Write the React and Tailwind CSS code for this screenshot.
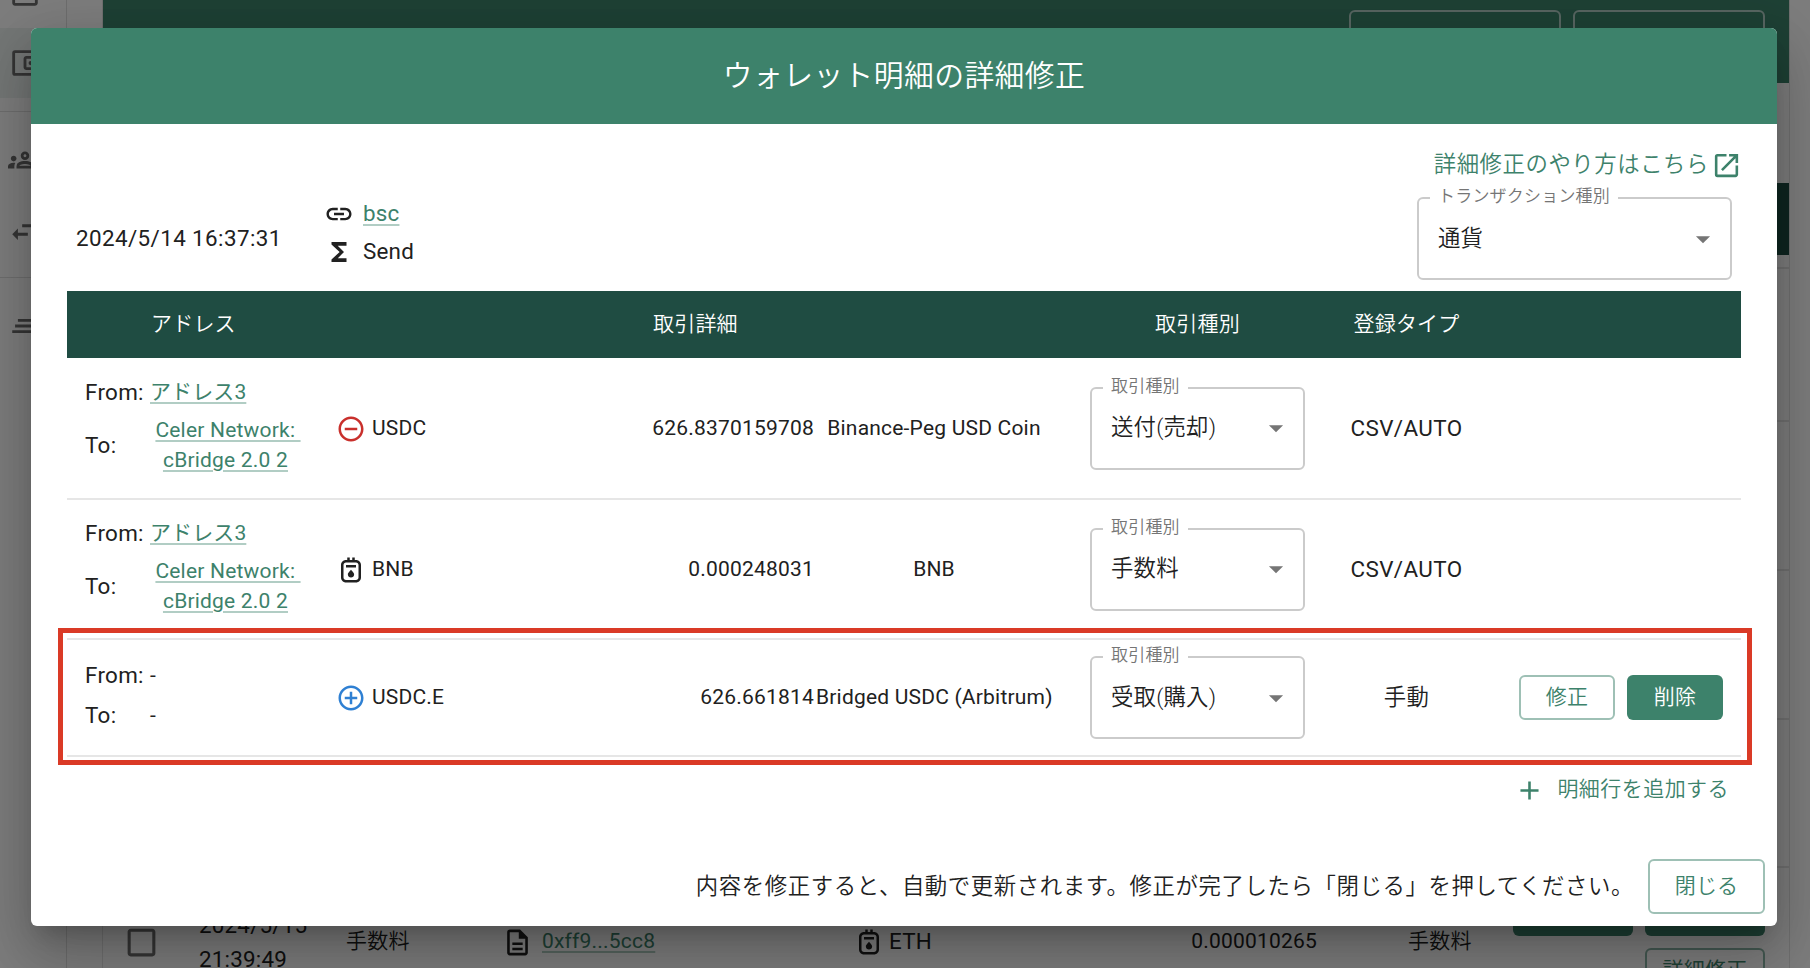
import {
  MdAdd,
  MdArrowDropDown,
  MdCheckBoxOutlineBlank,
  MdClearAll,
  MdFunctions,
  MdLink,
  MdOpenInNew,
  MdOutlineAccountBalanceWallet,
  MdOutlineAddCircleOutline,
  MdOutlineDescription,
  MdOutlineFeed,
  MdOutlineGasMeter,
  MdOutlineGroups,
  MdOutlineRemoveCircleOutline,
  MdSwapHoriz,
} from 'react-icons/md'

const ROWS = [
  {
    id: 1,
    from: 'アドレス3',
    to: ['Celer Network: ', 'cBridge 2.0 2'],
    kind: 'out',
    symbol: 'USDC',
    amount: '626.8370159708',
    name: 'Binance-Peg USD Coin',
    type: '送付(売却)',
    source: 'CSV/AUTO',
    height: 'h-[142px]',
  },
  {
    id: 2,
    from: 'アドレス3',
    to: ['Celer Network: ', 'cBridge 2.0 2'],
    kind: 'fee',
    symbol: 'BNB',
    amount: '0.000248031',
    name: 'BNB',
    type: '手数料',
    source: 'CSV/AUTO',
    height: 'h-[140px]',
  },
  {
    id: 3,
    kind: 'in',
    symbol: 'USDC.E',
    amount: '626.661814',
    name: 'Bridged USDC (Arbitrum)',
    type: '受取(購入)',
    source: '手動',
    height: 'h-[117px]',
    manual: true,
  },
]

const COLS = 'grid grid-cols-[265px_170px_314px_236px_291px_127px_1fr]'

function KindIcon({ kind }) {
  if (kind === 'out') return <MdOutlineRemoveCircleOutline className="size-[30px] text-[#c9302c]" />
  if (kind === 'in')  return <MdOutlineAddCircleOutline className="size-[30px] text-[#2f80d3]" />
  return <MdOutlineGasMeter className="size-[30px]" />
}

function Link({ children }) {
  return (
    <a className="whitespace-pre text-[#3d826b] underline decoration-[#3d826b]/40 decoration-2 underline-offset-[3px]">
      {children}
    </a>
  )
}

function Select({ label, value, className }) {
  return (
    <div className={`relative h-[83px] rounded-[6px] border-2 border-[#cbcbcb] flex items-center pl-[19px] pr-[10px] ${className}`}>
      <span className="absolute left-[11px] top-[-16px] bg-white px-[8px] text-[17px] leading-[26px] font-[350] text-[#757575] whitespace-nowrap">
        {label}
      </span>
      <span className="flex-1 text-[22.4px] font-[350]">{value}</span>
      <MdArrowDropDown className="size-[34px] text-[#757575]" />
    </div>
  )
}

function SideItem({ icon: Icon, active }) {
  return (
    <div className={`h-[70px] flex items-center pl-[8px] ${active ? 'bg-[#e8efed]' : ''}`}>
      <Icon className="size-[34px] shrink-0 text-[#6a6a6a]" />
    </div>
  )
}

// Page under the dialog, dimmed by the backdrop
function WalletPage() {
  return (
    <div className="flex h-[968px] overflow-hidden bg-[#fafafa]">
      <aside className="w-[67px] shrink-0 border-r border-[#dcdcdc]">
        <div className="-mt-[42px]">
          <SideItem icon={MdOutlineFeed} />
          <SideItem icon={MdOutlineAccountBalanceWallet} active />
          <div className="my-[13px] h-px bg-[#dcdcdc]" />
          <SideItem icon={MdOutlineGroups} />
          <SideItem icon={MdSwapHoriz} />
          <div className="mt-[12px] mb-[13px] h-px bg-[#dcdcdc]" />
          <SideItem icon={MdClearAll} />
        </div>
      </aside>

      <main className="ml-[35px] w-[1688px] shrink-0 border-x border-[#e0e0e0]">
        <div className="h-[83px] bg-[#3d826b] flex justify-end gap-[12px] pt-[10px] pr-[24px]">
          <div className="w-[212px] h-[50px] rounded-[6px] border-2 border-white/60" />
          <div className="w-[192px] h-[50px] rounded-[6px] border-2 border-white/60" />
        </div>
        <div className="mt-[100px] h-[72px] bg-[#1e4c42]" />
        <div className="h-[14px] border-b-2 border-[#e0e0e0]" />
        <div className="h-[153px] border-b-2 border-[#e0e0e0]" />
        <div className="h-[149px] border-b-2 border-[#e0e0e0]" />
        <div className="h-[149px] border-b-2 border-[#e0e0e0]" />
        <div className="h-[148px] border-b-2 border-[#e0e0e0]" />

        <div className="h-[148px] flex items-center text-[22.4px]">
          <MdCheckBoxOutlineBlank className="ml-[20px] size-[37px] shrink-0 text-[#6a6a6a]" />
          <div className="ml-[39px] w-[147px] leading-[34px]">
            2024/5/15
            <br />
            21:39:49
          </div>
          <div className="w-[156px] text-[21px] font-[350]">手数料</div>
          <MdOutlineDescription className="size-[31px] shrink-0" />
          <div className="ml-[9px] w-[312px] text-[21px]"><Link>0xff9...5cc8</Link></div>
          <MdOutlineGasMeter className="size-[30px] shrink-0" />
          <div className="ml-[5px] w-[228px]">ETH</div>
          <div className="w-[200px] text-right text-[21px]">0.000010265</div>
          <div className="ml-[91px] w-[105px] text-[21px] font-[350]">手数料</div>
          <div className="grid grid-cols-[120px_120px] gap-x-[12px] gap-y-[12px] text-[21px]">
            <div className="h-[46px] rounded-[6px] bg-[#3d826b]" />
            <div className="h-[46px] rounded-[6px] bg-[#3d826b]" />
            <div />
            <div className="h-[46px] rounded-[6px] border-2 border-[#3d826b]/60 text-[#3d826b] flex items-center justify-center">
              詳細修正
            </div>
          </div>
        </div>
      </main>
    </div>
  )
}

function DetailRow({ row }) {
  return (
    <div className={`relative ${COLS} ${row.height} items-center border-b-2 border-[#e6e6e6] text-[21px]`}>
      <div className={`flex flex-col pl-[18px] text-[22.4px] ${row.manual ? 'gap-[14px] -mt-[6px]' : 'gap-[10px] -mt-[2px]'}`}>
        <div className="flex items-center leading-[26px] tracking-[0.3px]">
          <span className="w-[65px]">From:</span>
          <span className="text-[21px] tracking-[0.1px]">{row.from ? <Link>{row.from}</Link> : '-'}</span>
        </div>
        <div className="flex items-center leading-[26px] tracking-[0.3px]">
          <span className="w-[65px]">To:</span>
          {row.to ? (
            <div className="ml-px w-[154px] flex flex-col items-center text-[21px] leading-[30px] tracking-[0.2px]">
              {row.to.map(line => (
                <span key={line} className="last:mr-[5px]"><Link>{line}</Link></span>
              ))}
            </div>
          ) : (
            <span className="text-[21px]">-</span>
          )}
        </div>
      </div>
      <div className={`flex items-center gap-[6px] pl-[4px] ${row.manual ? '' : 'pt-[2px]'}`}>
        <KindIcon kind={row.kind} />
        <span>{row.symbol}</span>
      </div>
      <div className={`pr-[2px] text-right ${row.manual ? '' : 'pt-[2px]'}`}>{row.amount}</div>
      <div className={`text-center whitespace-nowrap ${row.manual ? '' : 'pt-[2px]'}`}>{row.name}</div>
      <Select label="取引種別" value={row.type} className="w-[215px] mx-auto" />
      <div className={`text-center text-[22.4px] tracking-[0.4px] whitespace-nowrap ${row.manual ? 'font-[350]' : 'pt-[2px]'}`}>
        {row.source}
      </div>
      {row.manual && (
        <div className="flex gap-[12px] pl-[49px] font-[350]">
          <button className="w-[96px] h-[45px] shrink-0 rounded-[6px] border-2 border-[#9ec0b5] text-[#3d826b]">修正</button>
          <button className="w-[96px] h-[45px] shrink-0 rounded-[6px] bg-[#3d826b] text-white">削除</button>
        </div>
      )}
      {row.manual && (
        <div className="absolute -left-[9px] -right-[11px] -top-[12px] -bottom-[10px] border-5 border-[#da3a26]" />
      )}
    </div>
  )
}

export default function App() {
  return (
    <div className="relative w-[1810px] h-[968px] overflow-hidden font-['Roboto','Noto_Sans_CJK_JP',sans-serif] tracking-[0.2px] text-[#212121]">
      <WalletPage />

      {/* Backdrop + dialog */}
      <div className="absolute inset-0 bg-black/50 pt-[28px] pl-[31px]">
        <div className="w-[1746px] h-[898px] rounded-[6px] overflow-hidden bg-white flex flex-col shadow-[0_15px_21px_-10px_rgba(0,0,0,0.2),0_34px_53px_4px_rgba(0,0,0,0.14),0_13px_64px_11px_rgba(0,0,0,0.12)]">
          <h2 className="h-[96px] shrink-0 bg-[#3d826b] text-white text-[29.8px] tracking-[0.4px] font-[350] flex items-center justify-center">
            ウォレット明細の詳細修正
          </h2>

          <div className="px-[36px] flex-1 flex flex-col">
            <div className="mt-[26px] h-[30px] flex items-center justify-end text-[#3d826b]">
              <a className="text-[22.4px] tracking-[0.55px] font-[350]">詳細修正のやり方はこちら</a>
              <MdOpenInNew className="ml-[2px] -mr-px size-[31px]" />
            </div>

            <div className="mt-[17px] h-[94px] flex text-[22.4px]">
              <div className="w-[257px] pl-[9px] leading-[82px] tracking-[0.4px]">2024/5/14 16:37:31</div>
              <div className="-mt-[2px] flex-1">
                <div className="h-[38px] flex items-center gap-[9px]">
                  <MdLink className="size-[30px]" />
                  <Link>bsc</Link>
                </div>
                <div className="h-[38px] flex items-center gap-[9px]">
                  <MdFunctions className="size-[30px]" />
                  <span>Send</span>
                </div>
              </div>
              <Select label="トランザクション種別" value="通貨" className="w-[315px] mr-[9px]" />
            </div>

            <div className={`${COLS} h-[67px] shrink-0 items-center bg-[#1f4c42] text-white text-[21px] font-[350]`}>
              <div className="pl-[84px]">アドレス</div>
              <div className="col-span-3 pl-[321px]">取引詳細</div>
              <div className="text-center">取引種別</div>
              <div className="text-center">登録タイプ</div>
            </div>
            {ROWS.map(row => <DetailRow key={row.id} row={row} />)}

            <div className="h-[66px] flex items-center justify-end pr-[12px] text-[21px] tracking-[0.45px] font-[350] text-[#3d826b]">
              <MdAdd className="mr-[12px] size-[31px]" />
              明細行を追加する
            </div>
          </div>

          <div className="mb-[12px] flex items-center justify-end gap-[14px] pr-[12px] text-[22.4px] font-[350]">
            <p className="tracking-[0.6px]">内容を修正すると、自動で更新されます。修正が完了したら「閉じる」を押してください。</p>
            <button className="w-[117px] h-[55px] rounded-[6px] border-2 border-[#9ec0b5] text-[21px] text-[#3d826b]">閉じる</button>
          </div>
        </div>
      </div>
    </div>
  )
}
